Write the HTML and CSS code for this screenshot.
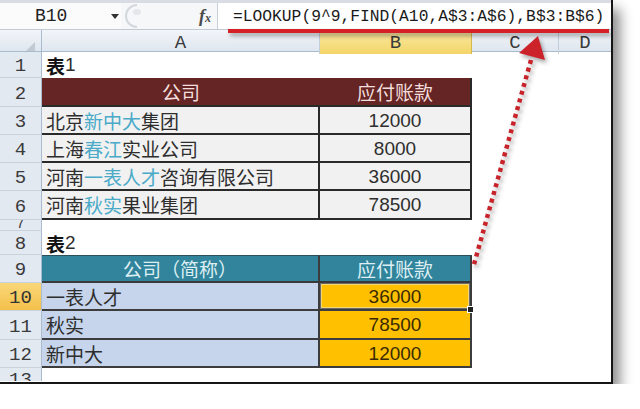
FILE: index.html
```html
<!DOCTYPE html>
<html lang="zh">
<head>
<meta charset="utf-8">
<title>LOOKUP FIND</title>
<link rel="stylesheet" href="styles.css">
</head>
<body>
<div class="window">
  <div class="fbar">
    <div class="namebox"><span class="nb-text">B10</span><span class="nb-arrow"></span></div>
    <div class="fb-mid">
      <svg class="grip" width="24" height="26" viewBox="0 0 24 26"><path d="M14 2 A11 11 0 0 0 14 24" fill="none" stroke="#d3d8de" stroke-width="2"/><ellipse cx="14" cy="9" rx="4" ry="3" fill="#e3e6ea"/></svg>
      <span class="fx">f<span class="fx-x">x</span></span>
    </div>
    <div class="formula">=LOOKUP(9^9,FIND(A10,A$3:A$6),B$3:B$6)</div>
  </div>
  <div class="sheet">
    <div class="row hdr">
      <div class="corner"><span class="corner-tri"></span></div>
      <div class="ch">A</div>
      <div class="ch ch-sel">B</div>
      <div class="ch">C</div>
      <div class="ch ch-last">D</div>
    </div>
    <div class="row r26">
      <div class="rh">1</div>
      <div class="c left"><b class="strong">表</b>1</div>
      <div class="c"></div><div class="c"></div><div class="c"></div>
    </div>
    <div class="row r29">
      <div class="rh">2</div>
      <div class="c t1h">公司</div>
      <div class="c t1h t1r">应付账款</div>
      <div class="c"></div><div class="c"></div>
    </div>
    <div class="row r28">
      <div class="rh">3</div>
      <div class="c t1 left t1r">北京<span class="hl">新中大</span>集团</div>
      <div class="c t1 t1r num">12000</div>
      <div class="c"></div><div class="c"></div>
    </div>
    <div class="row r28">
      <div class="rh">4</div>
      <div class="c t1 left t1r">上海<span class="hl">春江</span>实业公司</div>
      <div class="c t1 t1r num">8000</div>
      <div class="c"></div><div class="c"></div>
    </div>
    <div class="row r28">
      <div class="rh">5</div>
      <div class="c t1 left t1r">河南<span class="hl">一表人才</span>咨询有限公司</div>
      <div class="c t1 t1r num">36000</div>
      <div class="c"></div><div class="c"></div>
    </div>
    <div class="row r29">
      <div class="rh">6</div>
      <div class="c t1 left t1r">河南<span class="hl">秋实</span>果业集团</div>
      <div class="c t1 t1r num">78500</div>
      <div class="c"></div><div class="c"></div>
    </div>
    <div class="row r11">
      <div class="rh rh-clip-top">7</div>
      <div class="c"></div><div class="c"></div><div class="c"></div><div class="c"></div>
    </div>
    <div class="row r24">
      <div class="rh">8</div>
      <div class="c left"><b class="strong">表</b>2</div>
      <div class="c"></div><div class="c"></div><div class="c"></div>
    </div>
    <div class="row r28">
      <div class="rh">9</div>
      <div class="c t2h t2r">公司（简称）</div>
      <div class="c t2h t2r">应付账款</div>
      <div class="c"></div><div class="c"></div>
    </div>
    <div class="row r28">
      <div class="rh rh-sel">10</div>
      <div class="c t2a left t2r">一表人才</div>
      <div class="c t2b t2r num sel">36000<span class="handle"></span></div>
      <div class="c"></div><div class="c"></div>
    </div>
    <div class="row r29">
      <div class="rh">11</div>
      <div class="c t2a left t2r">秋实</div>
      <div class="c t2b t2r num">78500</div>
      <div class="c"></div><div class="c"></div>
    </div>
    <div class="row r28">
      <div class="rh">12</div>
      <div class="c t2a left t2r">新中大</div>
      <div class="c t2b t2r num">12000</div>
      <div class="c"></div><div class="c"></div>
    </div>
    <div class="row r13">
      <div class="rh rh-clip-bottom">13</div>
      <div class="c"></div><div class="c"></div><div class="c"></div><div class="c"></div>
    </div>
  </div>
  <svg class="overlay" width="613" height="384" viewBox="0 0 613 384">
    <g class="marks">
      <line x1="228" y1="31" x2="609" y2="31" stroke="#d42027" stroke-width="4"/>
      <line x1="531" y1="60" x2="473" y2="268" stroke="#c8232b" stroke-width="4.5" stroke-dasharray="4 4"/>
      <polygon points="538,36 519,53 545,60" fill="#cc232b"/>
    </g>
  </svg>
</div>
</body>
</html>
```
FILE: styles.css
```css
body {
  margin: 0;
  background: #ffffff;
}

.window {
  position: relative;
  width: 611px;
  height: 382px;
  border-right: 2px solid #151515;
  border-bottom: 2px solid #151515;
  box-shadow: 7px 9px 12px rgba(0, 0, 0, 0.45);
  overflow: hidden;
  background: #ffffff;
}

/* formula bar */
.fbar {
  display: flex;
  height: 30px;
  box-sizing: border-box;
  border-top: 3px solid #d9dde3;
  border-bottom: 1px solid #c2c9d3;
  background: #f5f7f9;
}

.namebox {
  width: 121px;
  display: flex;
  align-items: center;
  background: #fbfbfc;
}

.nb-text {
  font-family: "Liberation Mono", monospace;
  font-size: 18px;
  color: #222;
  padding-left: 35px;
  width: 76px;
}

.nb-arrow {
  width: 0;
  height: 0;
  border-left: 4px solid transparent;
  border-right: 4px solid transparent;
  border-top: 5px solid #333;
}

.fb-mid {
  width: 96px;
  display: flex;
  align-items: center;
  justify-content: space-between;
  padding-right: 6px;
  box-sizing: border-box;
}

.grip {
  margin-left: 2px;
}

.fx {
  font-family: "Liberation Serif", serif;
  font-style: italic;
  font-weight: bold;
  font-size: 18px;
  color: #4a4a4a;
}

.fx-x {
  font-size: 12px;
}

.formula {
  flex: 1;
  background: #ffffff;
  border-left: 1px solid #c9cfd8;
  font-family: "Liberation Mono", monospace;
  font-size: 16.3px;
  color: #1a1a1a;
  display: flex;
  align-items: center;
  padding-left: 15px;
  white-space: nowrap;
}

/* sheet */
.row {
  display: grid;
  grid-template-columns: 42px 278px 152px 87px 52px;
}

.hdr {
  height: 22px;
  background: linear-gradient(#f2f5f9, #dfe6ef);
  border-bottom: 1px solid #a9bbcf;
  box-sizing: border-box;
}

.corner {
  position: relative;
  border-right: 1px solid #a9bbcf;
}

.corner-tri {
  position: absolute;
  right: 6px;
  bottom: 3px;
  width: 0;
  height: 0;
  border-left: 9px solid transparent;
  border-bottom: 9px solid #c3c9d1;
}

.ch {
  display: flex;
  align-items: center;
  justify-content: center;
  font-family: "Liberation Mono", monospace;
  font-size: 19px;
  color: #3a3a3a;
  border-right: 1px solid #c3cedb;
  padding-top: 2px;
}

.ch-last {
  border-right: none;
}

.ch-sel {
  background: linear-gradient(#faeaa4, #f3d568);
  border-right: 1px solid #d9b84a;
}

.r26 { height: 26px; }
.r29 { height: 29px; }
.r28 { height: 28px; }
.r24 { height: 24px; }
.r11 { height: 11px; }
.r13 { height: 13px; }

.rh {
  display: flex;
  align-items: center;
  justify-content: center;
  background: #e3e9f1;
  border-right: 1px solid #a9bbcf;
  border-bottom: 1px solid #c8d1dc;
  box-sizing: border-box;
  font-family: "Liberation Mono", monospace;
  font-size: 19px;
  color: #3a3a3a;
  overflow: hidden;
  line-height: 20px;
  padding-top: 3px;
}

.rh-clip-top {
  align-items: flex-end;
  padding-top: 0;
  font-size: 14px;
  line-height: 12px;
}

.rh-clip-bottom {
  align-items: flex-start;
  padding-top: 2px;
  border-bottom: none;
}

.rh-sel {
  background: linear-gradient(#f9d77a, #f4c04a);
  color: #333;
}

.c {
  display: flex;
  align-items: center;
  justify-content: center;
  box-sizing: border-box;
  font-family: "Liberation Sans", "Noto Sans CJK SC", sans-serif;
  font-size: 19px;
  color: #2e2e2e;
  white-space: nowrap;
  overflow: hidden;
  position: relative;
}

.left {
  justify-content: flex-start;
  padding-left: 4px;
}

.strong {
  font-weight: bold;
  color: #111;
}

.num {
  padding-top: 1px;
}

.hl {
  color: #4aaac8;
}

/* table 1 */
.t1h {
  background: #642524;
  color: #f3dedd;
  border-bottom: 2px solid #2a2a2a;
}

.t1 {
  background: #f1f1f1;
  border-bottom: 2px solid #2a2a2a;
}

.t1r {
  border-right: 2px solid #2a2a2a;
}

/* table 2 */
.t2h {
  background: #31849b;
  color: #ddeff4;
  border-top: 1px solid #2d4f5a;
  border-bottom: 2px solid #3a3a3a;
}

.t2a {
  background: #c6d5eb;
  border-bottom: 2px solid #3c3c3c;
}

.t2b {
  background: #ffc000;
  color: #3a2c00;
  border-bottom: 2px solid #3c3c3c;
}

.t2r {
  border-right: 2px solid #3c3c3c;
}

.sel {
  overflow: visible;
  box-shadow: inset 0 0 0 1px #6a6a6a, inset 0 0 0 2px #f5d675;
}

.handle {
  position: absolute;
  right: -4px;
  bottom: -4px;
  width: 5px;
  height: 5px;
  background: #222;
  border: 1px solid #fff;
  z-index: 2;
}

/* annotation overlay */
.overlay {
  position: absolute;
  left: 0;
  top: 0;
  pointer-events: none;
}

.marks {
  filter: drop-shadow(2px 3px 2px rgba(0, 0, 0, 0.35));
}
```
